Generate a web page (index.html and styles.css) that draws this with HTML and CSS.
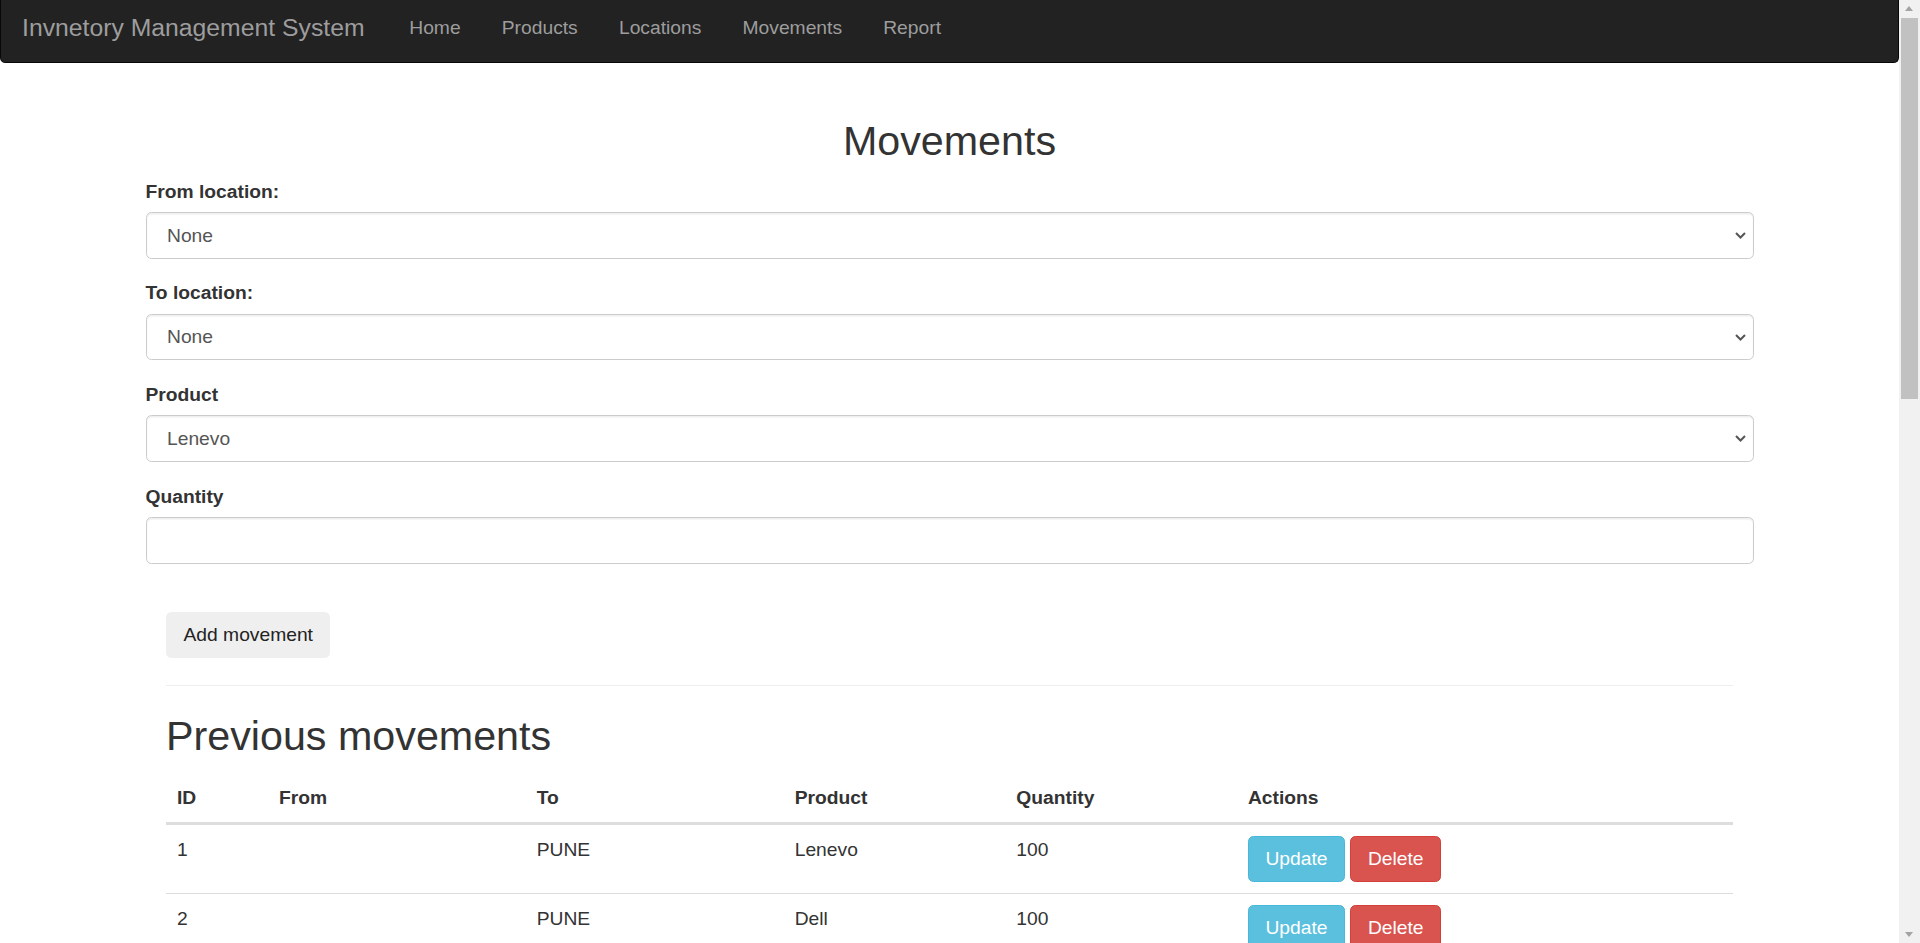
FILE: index.html
```html
<!DOCTYPE html>
<html lang="en">
<head>
<meta charset="utf-8">
<title>Movements</title>
<link rel="stylesheet" href="styles.css">
</head>
<body>
<nav class="navbar">
  <a class="brand" href="#">Invnetory Management System</a>
  <ul class="nav">
    <li><a href="#">Home</a></li>
    <li><a href="#">Products</a></li>
    <li><a href="#">Locations</a></li>
    <li><a href="#">Movements</a></li>
    <li><a href="#">Report</a></li>
  </ul>
</nav>
<main class="page">
  <h2 class="page-title">Movements</h2>
  <form class="movement-form">
    <div class="form-group">
      <label for="from">From location:</label>
      <div class="select-wrap">
        <select id="from" class="form-control"><option>None</option></select>
        <svg class="chevron" viewBox="0 0 11 7"><path d="M1 1l4.5 4.5L10 1"/></svg>
      </div>
    </div>
    <div class="form-group">
      <label for="to">To location:</label>
      <div class="select-wrap">
        <select id="to" class="form-control"><option>None</option></select>
        <svg class="chevron" viewBox="0 0 11 7"><path d="M1 1l4.5 4.5L10 1"/></svg>
      </div>
    </div>
    <div class="form-group">
      <label for="product">Product</label>
      <div class="select-wrap">
        <select id="product" class="form-control"><option>Lenevo</option></select>
        <svg class="chevron" viewBox="0 0 11 7"><path d="M1 1l4.5 4.5L10 1"/></svg>
      </div>
    </div>
    <div class="form-group">
      <label for="qty">Quantity</label>
      <input id="qty" class="form-control" type="text">
    </div>
    <div class="form-actions">
      <button type="submit" class="btn btn-plain">Add movement</button>
    </div>
  </form>
  <section class="history">
    <hr>
    <h2 class="section-title">Previous movements</h2>
    <table class="table">
      <colgroup>
        <col class="c-id"><col class="c-from"><col class="c-to"><col class="c-product"><col class="c-qty"><col class="c-actions">
      </colgroup>
      <thead>
        <tr><th>ID</th><th>From</th><th>To</th><th>Product</th><th>Quantity</th><th>Actions</th></tr>
      </thead>
      <tbody>
        <tr>
          <td>1</td><td></td><td>PUNE</td><td>Lenevo</td><td>100</td>
          <td><button class="btn btn-info">Update</button> <button class="btn btn-danger">Delete</button></td>
        </tr>
        <tr>
          <td>2</td><td></td><td>PUNE</td><td>Dell</td><td>100</td>
          <td><button class="btn btn-info">Update</button> <button class="btn btn-danger">Delete</button></td>
        </tr>
      </tbody>
    </table>
  </section>
</main>
<div class="fake-scrollbar" aria-hidden="true">
  <span class="sb-btn sb-up"></span>
  <span class="sb-thumb"></span>
  <span class="sb-btn sb-down"></span>
</div>
</body>
</html>
```
FILE: styles.css
```css
* { box-sizing: border-box; }

html { scrollbar-width: none; }
::-webkit-scrollbar { width: 0; height: 0; }

body {
  margin: 0 21px 0 0;
  font-family: "Liberation Sans", Arial, sans-serif;
  font-size: 19.25px;
  line-height: 1.42857;
  color: #333;
  background: #fff;
}

/* scrollbar drawn over the right edge */
.fake-scrollbar {
  position: fixed;
  top: 0;
  right: 0;
  width: 21px;
  height: 100vh;
  display: flex;
  flex-direction: column;
  background: #f1f1f1;
}
.sb-btn {
  position: relative;
  display: block;
  height: 17px;
  flex: none;
}
.sb-btn::after {
  content: "";
  position: absolute;
  left: 6px;
  width: 0;
  height: 0;
  border-left: 4.5px solid transparent;
  border-right: 4.5px solid transparent;
}
.sb-up::after { top: 6px; border-bottom: 5px solid #a3a3a3; }
.sb-down::after { top: 6px; border-top: 5px solid #a3a3a3; }
.sb-down { margin-top: auto; }
.sb-thumb {
  display: block;
  flex: none;
  height: 381px;
  margin: 1px 2px 0;
  background: #c1c1c1;
}

/* navbar */
.navbar {
  display: flex;
  align-items: flex-start;
  height: 63px;
  background: #222;
  border: 1px solid #080808;
  border-top: 0;
  border-radius: 0 0 5.5px 5.5px;
}
.brand {
  display: block;
  padding: 14.4px 20.6px 0 21px;
  font-size: 24.75px;
  line-height: 27.5px;
  color: #9d9d9d;
  text-decoration: none;
}
.nav {
  display: flex;
  list-style: none;
  margin: 0 0 0 3.5px;
  padding: 0;
}
.nav a {
  display: block;
  padding: 14.4px 20.6px 0;
  line-height: 27.5px;
  color: #9d9d9d;
  text-decoration: none;
}

/* page */
.page {
  padding: 0 145.5px;
}
.page-title {
  margin: 55.5px 0 13.75px;
  text-align: center;
  font-size: 41.25px;
  font-weight: 500;
  line-height: 1.1;
}

.form-group { margin-bottom: 20.625px; }
.form-group label {
  display: block;
  margin-bottom: 6.875px;
  font-weight: 700;
}
.form-control {
  display: block;
  width: 100%;
  height: 46.75px;
  padding: 8.25px 16.5px 8.25px 20.5px;
  font: inherit;
  line-height: 27.5px;
  color: #555;
  background: #fff;
  border: 1px solid #ccc;
  border-radius: 5.5px;
  box-shadow: inset 0 1.375px 1.375px rgba(0, 0, 0, .075);
  outline: none;
}
select.form-control {
  appearance: none;
  -webkit-appearance: none;
}
.select-wrap { position: relative; }
.chevron {
  position: absolute;
  right: 7.5px;
  top: 50%;
  width: 11px;
  height: 7px;
  margin-top: -3.5px;
  fill: none;
  stroke: #555;
  stroke-width: 2;
  pointer-events: none;
}

.form-actions {
  padding: 27.4px 20.5px 0;
}

.btn {
  display: inline-block;
  padding: 8.25px 16.5px;
  font: inherit;
  line-height: 27.5px;
  border: 1px solid transparent;
  border-radius: 5.5px;
  vertical-align: middle;
  cursor: pointer;
}
.btn-plain { background: #efefef; color: #222; }
.btn-info { background: #5bc0de; border-color: #46b8da; color: #fff; }
.btn-danger { background: #d9534f; border-color: #d43f3a; color: #fff; }

.history { padding: 0 20.5px; }
.history hr {
  margin: 27.5px 0;
  height: 0;
  border: 0;
  border-top: 1px solid #eee;
}
.section-title {
  margin: 27.5px 0 13.75px;
  font-size: 41.25px;
  font-weight: 500;
  line-height: 1.1;
}

.table {
  width: 100%;
  border-collapse: collapse;
  table-layout: fixed;
}
.c-id { width: 102px; }
.c-from { width: 257.7px; }
.c-to { width: 258px; }
.c-product { width: 221.6px; }
.c-qty { width: 231.7px; }
.table th, .table td {
  padding: 11px;
  text-align: left;
  line-height: 27.5px;
  vertical-align: top;
}
.table th {
  padding-bottom: 10px;
  font-weight: 700;
  vertical-align: bottom;
  border-bottom: 3px solid #ddd;
}
.table td { border-top: 1px solid #ddd; }
```
